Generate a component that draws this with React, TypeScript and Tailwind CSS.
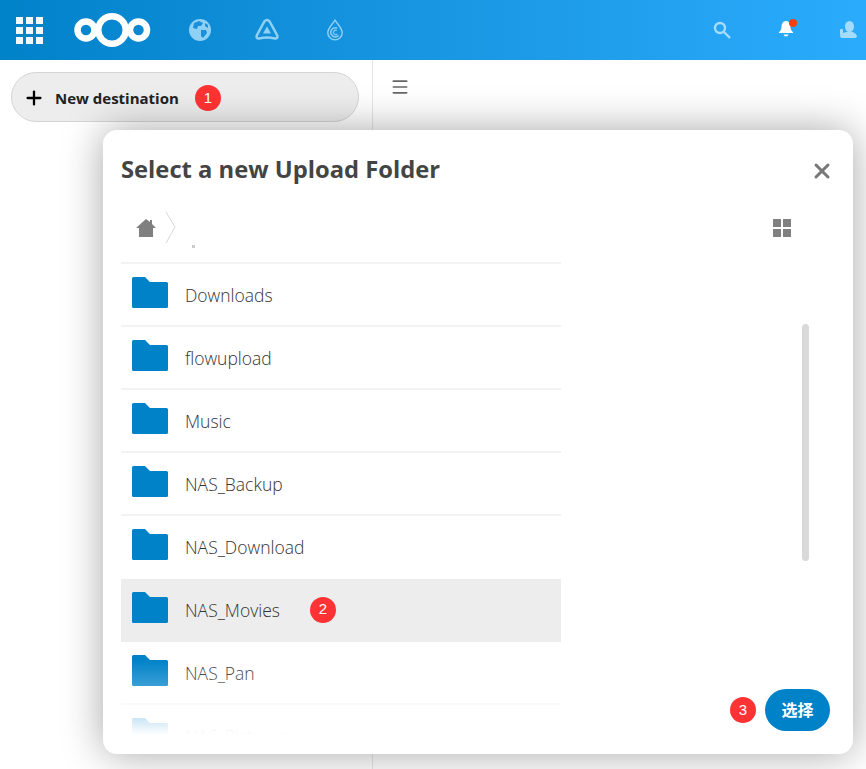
import React from 'react';
import { Plus, Menu, X } from 'lucide-react';

const font = { fontFamily: '"Open Sans", "Noto Sans CJK SC", sans-serif' };

const folders = ['Downloads', 'flowupload', 'Music', 'NAS_Backup', 'NAS_Download', 'NAS_Movies', 'NAS_Pan', 'NAS_Pictures'];

const Badge: React.FC<{ n: number }> = ({ n }) => (
  <span className="flex h-[26px] w-[26px] shrink-0 items-center justify-center rounded-full bg-[#ff3333] pb-[2px] font-['Liberation_Sans'] text-[15px] font-normal leading-none text-white">{n}</span>
);

const FolderIcon = () => (
  <svg width="36" height="31" viewBox="0 0 36 31" className="mt-[-5px] shrink-0">
    <path d="M0 1.5 Q0 0 1.5 0 H13 L18 5 H34.5 Q36 5 36 6.5 V29.5 Q36 31 34.5 31 H1.5 Q0 31 0 29.5 Z" fill="#0082c9" />
  </svg>
);

const AppsIcon = () => (
  <div className="grid grid-cols-3 gap-[3px]">
    {Array.from({ length: 9 }).map((_, i) => (
      <span key={i} className="h-[7px] w-[7px] bg-white/95" />
    ))}
  </div>
);

const Logo = () => (
  <svg width="78" height="36" viewBox="0 0 78 36">
    <g fill="none" stroke="#fff">
      <circle cx="13" cy="18" r="8.5" strokeWidth="6.5" />
      <circle cx="39" cy="18" r="13.75" strokeWidth="6.5" />
      <circle cx="65.500" cy="18" r="8.5" strokeWidth="6.5" />
    </g>
  </svg>
);

const GlobeIcon = () => (
  <svg width="24" height="24" viewBox="0 0 24 24">
    <circle cx="12" cy="12" r="11" fill="#8fd0f5" />
    <path d="M6 5 L11 3 L15 5 L13 8 L10 8 L9 11 L5 10 Z M13 12 L18 12 L19 15 L15 20 L13 18 Z M17 5 L20 7 L20 10 L17 8 Z" fill="#1a8fdc" />
  </svg>
);

const TriangleIcon = () => (
  <svg width="24" height="24" viewBox="0 0 24 24">
    <path d="M12 2 Q14 2 15.5 5 L22 17 Q23.5 20.500 20 20.500 Q12 18.500 4 20.500 Q0.500 20.500 2 17 L8.500 5 Q10 2 12 2 Z" fill="none" stroke="#8fd0f5" strokeWidth="2.500" />
    <path d="M12 8.500 L16 15.500 H8 Z" fill="#8fd0f5" />
  </svg>
);

const DropIcon = () => (
  <svg width="18" height="24" viewBox="0 0 20 24">
    <path d="M10 1 C13 6 18 10 18 15 A8 8 0 0 1 2 15 C2 10 7 6 10 1 Z" fill="none" stroke="#8fd0f5" strokeWidth="1.600" />
    <path d="M12.500 10 A5 5 0 1 0 14 18" fill="none" stroke="#8fd0f5" strokeWidth="1.600" />
    <path d="M12 12.500 A2.500 2.500 0 1 0 12.500 16.500" fill="none" stroke="#8fd0f5" strokeWidth="1.300" />
  </svg>
);

const SearchIcon = () => (
  <svg width="18" height="18" viewBox="0 0 18 18" fill="none" stroke="#a6dcfb" strokeWidth="2.400">
    <circle cx="7" cy="7" r="5" />
    <path d="M11 11 L17 17" />
  </svg>
);

const BellIcon = () => (
  <div className="relative h-[18px] w-[16px]">
    <svg width="14" height="16" viewBox="0 0 14 16" fill="#fff">
      <path d="M7 0 C10 0 11.500 3 11.500 6 C11.500 8.500 12.500 10 14 11 V12 H0 V11 C1.500 10 2.500 8.500 2.500 6 C2.500 3 4 0 7 0 Z" />
      <path d="M4.500 13.500 H9.500 Q9 15.500 7 15.500 Q5 15.500 4.500 13.500 Z" />
    </svg>
    <span className="absolute right-[-2px] top-[-2px] h-[8px] w-[8px] rounded-full bg-[#f4400f]" />
  </div>
);

const UserIcon = () => (
  <svg width="19" height="18" viewBox="0 0 19 18" fill="#a6dcfb">
    <ellipse cx="10.500" cy="5.500" rx="4.500" ry="5.500" />
    <path d="M4 12 Q7 10.500 10.500 10.500 Q16 10.500 18 15 Q18 17 15 17 H5 Q1 17 1 15 Q1 13 4 12 Z" />
    <rect x="1" y="8" width="3" height="6" rx="1" />
  </svg>
);

const HomeIcon = () => (
  <svg width="20" height="18" viewBox="0 0 20 18" fill="#7f7f7f">
    <path d="M10 0 L14 3 V1 H16 V5 L20 9 H17 V18 H3 V9 H0 Z" />
  </svg>
);

const App: React.FC = () => {
  return (
    <div className="relative h-[769px] w-[866px] overflow-hidden bg-white" style={font}>
      {/* top bar */}
      <header className="flex h-[60px] items-center bg-gradient-to-r from-[#0082c9] to-[#2aabfc] pl-[16px] pr-[8px]">
        <AppsIcon />
        <div className="ml-[30px]"><Logo /></div>
        <div className="ml-[37px] flex items-center">
          <GlobeIcon />
          <div className="ml-[43px]"><TriangleIcon /></div>
          <div className="ml-[47px]"><DropIcon /></div>
        </div>
        <div className="ml-auto flex items-center">
          <SearchIcon />
          <div className="ml-[48px]"><BellIcon /></div>
          <div className="ml-[44px]"><UserIcon /></div>
        </div>
      </header>

      <div className="flex h-[709px]">
        {/* left nav */}
        <aside className="w-[373px] shrink-0 border-r border-[#e6e6e6] pl-[11px] pr-[13px] pt-[12px]">
          <button className="flex h-[50px] w-full items-center rounded-full border border-[#d5d5d5] bg-[#ededed] pl-[11px] pt-[2px]">
            <Plus size={22} strokeWidth={2.500} className="text-black" />
            <span className="ml-[10px] text-[15px] font-bold text-[#222]">New destination</span>
            <span className="ml-[16px]"><Badge n={1} /></span>
          </button>
        </aside>
        <main className="pl-[17px] pt-[17px]">
          <Menu size={20} className="text-[#666]" />
        </main>
      </div>

      {/* dialog */}
      <div className="absolute left-[103px] top-[130px] flex h-[624px] w-[750px] flex-col overflow-hidden rounded-[14px] bg-white pl-[18px] shadow-[0_0_40px_rgba(0,0,0,0.35)]">
        <div className="flex items-start pt-[20px]">
          <h2 className="text-[23.75px] font-bold leading-[38px] text-[#444]">Select a new Upload Folder</h2>
          <X size={24} strokeWidth={3} className="ml-auto mr-[19px] mt-[9px] text-[#777]" />
        </div>

        <div className="flex h-[74px] items-start pt-[24px]">
          <div className="ml-[15px] mt-[7px]"><HomeIcon /></div>
          <svg width="12" height="32" viewBox="0 0 12 32" className="ml-[9px]" fill="none" stroke="#d8d8d8">
            <path d="M1 0 L10 15 L1 31" />
          </svg>
          <span className="ml-[15px] mt-[33px] h-[3px] w-[3px] bg-[#ccc]" />
          <div className="ml-auto mr-[62px] mt-[7px] grid grid-cols-2 gap-[2px]">
            <span className="h-[8px] w-[8px] bg-[#808080]" />
            <span className="h-[8px] w-[8px] bg-[#808080]" />
            <span className="h-[8px] w-[8px] bg-[#808080]" />
            <span className="h-[8px] w-[8px] bg-[#808080]" />
          </div>
        </div>

        <div className="relative flex min-h-0 flex-1">
          <ul className="h-[473px] w-[440px] shrink-0 overflow-hidden">
            {folders.map((name) => (
              <li
                key={name}
                className={`flex h-[63px] items-center border-t-2 pl-[11px] text-[17.5px] font-light text-[#333] ${name === 'NAS_Movies' ? 'border-white bg-[#ededed]' : name === 'NAS_Pan' ? 'border-[#ededed]' : 'border-[#f3f3f3]'}`}
              >
                <FolderIcon />
                <span className="ml-[17px] pt-[1px]">{name}</span>
                {name === 'NAS_Movies' && <span className="ml-[30px]"><Badge n={2} /></span>}
              </li>
            ))}
          </ul>
          {/* fade at the end of the list */}
          <div className="absolute left-0 top-[398px] h-[75px] w-[440px] bg-[linear-gradient(to_bottom,rgba(255,255,255,0)_0%,rgba(255,255,255,0.25)_38%,rgba(255,255,255,0.8)_78%,#fff_100%)]" />
          {/* scrollbar */}
          <div className="ml-[241px] mt-[62px] h-[237px] w-[7px] rounded-full bg-[#d9d9d9]" />
        </div>

        <div className="absolute bottom-[23px] right-[23px] flex items-center">
          <Badge n={3} />
          <button className="ml-[9px] h-[42px] w-[65px] rounded-full bg-[#0082c9] text-[16px] font-bold text-white">选择</button>
        </div>
      </div>
    </div>
  );
};

export default App;
